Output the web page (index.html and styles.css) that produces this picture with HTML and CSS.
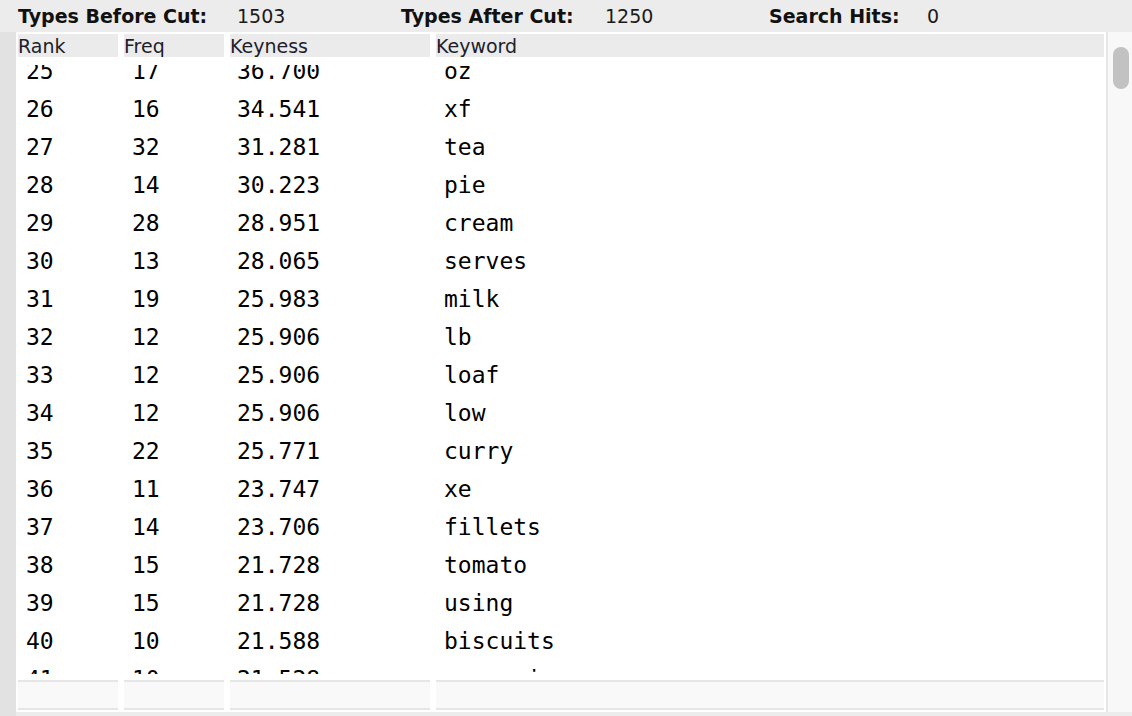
FILE: index.html
```html
<!DOCTYPE html>
<html lang="en">
<head>
<meta charset="utf-8">
<title>Keyword List</title>
<link rel="stylesheet" href="styles.css">
</head>
<body>
<div class="window">
  <header class="stats">
    <div class="stat stat-before"><span class="label">Types Before Cut:</span><span class="value">1503</span></div>
    <div class="stat stat-after"><span class="label">Types After Cut:</span><span class="value">1250</span></div>
    <div class="stat stat-hits"><span class="label">Search Hits:</span><span class="value">0</span></div>
  </header>
  <div class="main">
    <div class="gutter"></div>
    <div class="content">
      <div class="panel">
        <div class="table">
          <div class="thead">
            <div class="hcell">Rank</div>
            <div class="hcell">Freq</div>
            <div class="hcell">Keyness</div>
            <div class="hcell">Keyword</div>
          </div>
          <div class="tbody">
            <div class="rows">
              <div class="row"><span class="c-rank">25</span><span class="c-freq">17</span><span class="c-key">36.700</span><span class="c-word">oz</span></div>
              <div class="row"><span class="c-rank">26</span><span class="c-freq">16</span><span class="c-key">34.541</span><span class="c-word">xf</span></div>
              <div class="row"><span class="c-rank">27</span><span class="c-freq">32</span><span class="c-key">31.281</span><span class="c-word">tea</span></div>
              <div class="row"><span class="c-rank">28</span><span class="c-freq">14</span><span class="c-key">30.223</span><span class="c-word">pie</span></div>
              <div class="row"><span class="c-rank">29</span><span class="c-freq">28</span><span class="c-key">28.951</span><span class="c-word">cream</span></div>
              <div class="row"><span class="c-rank">30</span><span class="c-freq">13</span><span class="c-key">28.065</span><span class="c-word">serves</span></div>
              <div class="row"><span class="c-rank">31</span><span class="c-freq">19</span><span class="c-key">25.983</span><span class="c-word">milk</span></div>
              <div class="row"><span class="c-rank">32</span><span class="c-freq">12</span><span class="c-key">25.906</span><span class="c-word">lb</span></div>
              <div class="row"><span class="c-rank">33</span><span class="c-freq">12</span><span class="c-key">25.906</span><span class="c-word">loaf</span></div>
              <div class="row"><span class="c-rank">34</span><span class="c-freq">12</span><span class="c-key">25.906</span><span class="c-word">low</span></div>
              <div class="row"><span class="c-rank">35</span><span class="c-freq">22</span><span class="c-key">25.771</span><span class="c-word">curry</span></div>
              <div class="row"><span class="c-rank">36</span><span class="c-freq">11</span><span class="c-key">23.747</span><span class="c-word">xe</span></div>
              <div class="row"><span class="c-rank">37</span><span class="c-freq">14</span><span class="c-key">23.706</span><span class="c-word">fillets</span></div>
              <div class="row"><span class="c-rank">38</span><span class="c-freq">15</span><span class="c-key">21.728</span><span class="c-word">tomato</span></div>
              <div class="row"><span class="c-rank">39</span><span class="c-freq">15</span><span class="c-key">21.728</span><span class="c-word">using</span></div>
              <div class="row"><span class="c-rank">40</span><span class="c-freq">10</span><span class="c-key">21.588</span><span class="c-word">biscuits</span></div>
              <div class="row"><span class="c-rank">41</span><span class="c-freq">10</span><span class="c-key">21.528</span><span class="c-word">margarine</span></div>
            </div>
          </div>
          <div class="tfoot">
            <div class="fcell"></div>
            <div class="fcell"></div>
            <div class="fcell"></div>
            <div class="fcell"></div>
          </div>
        </div>
        <div class="scrollbar"><div class="thumb"></div></div>
      </div>
    </div>
  </div>
</div>
</body>
</html>
```

FILE: styles.css
```css
* {
  box-sizing: border-box;
}

html, body {
  margin: 0;
  padding: 0;
}

body {
  width: 1132px;
  height: 716px;
  overflow: hidden;
  background: #ececec;
  font-family: "DejaVu Sans", "Noto Sans", sans-serif;
  color: #111;
}

.window {
  display: flex;
  flex-direction: column;
  height: 716px;
}

/* ---------- top statistics bar ---------- */
.stats {
  display: flex;
  height: 32px;
  padding-left: 18px;
  font-size: 19px;
  line-height: 32px;
  white-space: nowrap;
}

.stat {
  display: flex;
}

.label {
  font-weight: bold;
  color: #111;
}

.value {
  color: #1a1a1a;
}

.stat-before .label { width: 219px; }
.stat-before .value { width: 164px; }
.stat-after .label { width: 204px; }
.stat-after .value { width: 164px; }
.stat-hits .label { width: 158px; }

/* ---------- main area ---------- */
.main {
  display: flex;
  height: 684px;
}

.gutter {
  width: 16px;
  background: #e2e2e2;
}

.content {
  flex: 1;
  display: flex;
  flex-direction: column;
  padding-bottom: 4px;
}

.panel {
  display: flex;
  height: 680px;
}

.table {
  width: 1090px;
  background: #fff;
  display: flex;
  flex-direction: column;
}

.thead,
.row,
.tfoot {
  display: grid;
  grid-template-columns: 100px 100px 200px 668px;
  column-gap: 6px;
  padding-left: 2px;
}

.thead {
  padding-top: 2px;
  padding-bottom: 8px;
}

.hcell {
  height: 23px;
  background: #ebebeb;
  font-size: 19px;
  line-height: 25px;
  color: #1e1e2a;
  padding-left: 0;
  white-space: nowrap;
  overflow: visible;
}

.tbody {
  height: 609px;
  overflow: hidden;
}

.rows {
  margin-top: -13px;
}

.row {
  height: 38px;
  font-family: "DejaVu Sans Mono", "Liberation Mono", monospace;
  font-size: 23px;
  line-height: 38px;
  color: #000;
  white-space: nowrap;
}

.c-rank { padding-left: 8px; }
.c-freq { padding-left: 8px; }
.c-key { padding-left: 7px; }
.c-word { padding-left: 8px; }

.tfoot {
  padding-top: 6px;
  padding-bottom: 2px;
}

.fcell {
  height: 30px;
  background: #f9f9f9;
  border-top: 2px solid #e6e6e6;
  border-bottom: 2px solid #e6e6e6;
}

/* ---------- scrollbar ---------- */
.scrollbar {
  width: 26px;
  border-left: 2px solid #e6e6e6;
  background: #f8f8f8;
  padding: 15px 0 0 5px;
}

.thumb {
  width: 16px;
  height: 42px;
  border-radius: 8px;
  background: #c2c2c2;
}
```
